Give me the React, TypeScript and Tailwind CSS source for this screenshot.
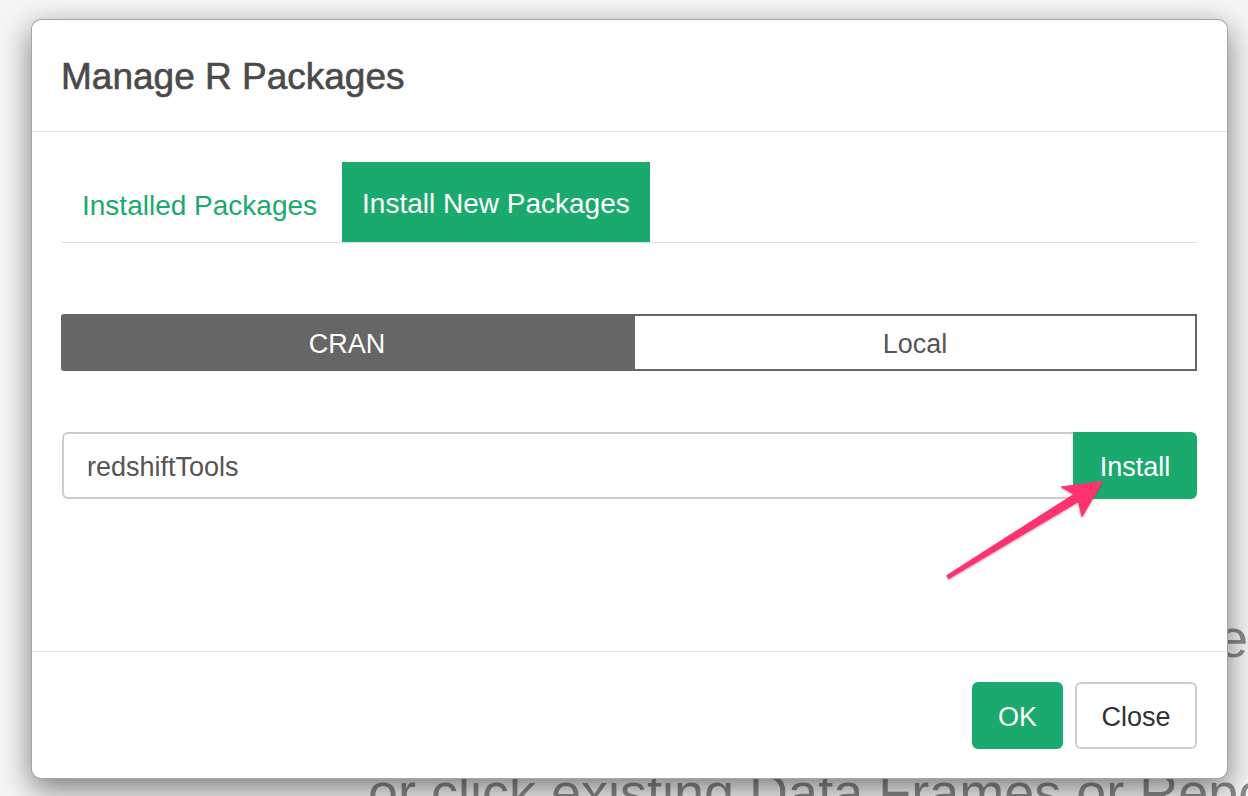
import React from "react";

const GREEN = "bg-[#1baa6e]";

export default function App() {
  return (
    <div className="relative w-[1248px] h-[796px] overflow-hidden bg-[#f5f5f5] font-['Liberation_Sans',Arial,sans-serif]">
      {/* Background page content (partially hidden by the modal) */}
      <div className="flex flex-col pt-[610px] text-[54px] leading-[56px] text-[#8a8a8a]">
        <div className="flex justify-end whitespace-nowrap overflow-hidden">
          <span>Click + button to create a new Data Frame</span>
        </div>
        <div className="mt-[98px] pl-[368px] whitespace-nowrap">
          or click existing Data Frames or Reports.
        </div>
      </div>

      {/* Modal */}
      <div className="absolute left-[31px] top-[19px] w-[1197px] h-[760px] flex flex-col bg-white border border-[rgba(0,0,0,0.35)] rounded-[10px] shadow-[0_10px_30px_rgba(0,0,0,0.5)]">
        {/* Header */}
        <div className="h-[112px] shrink-0 flex items-center pl-[29px] pr-[30px] pt-[2px] border-b border-[#e5e5e5]">
          <h4 className="text-[37px] leading-[40px] text-[#4a4a4a] [-webkit-text-stroke:0.6px_#4a4a4a]">
            Manage R Packages
          </h4>
        </div>

        {/* Body */}
        <div className="flex-1 flex flex-col px-[30px] pt-[30px]">
          {/* Tabs */}
          <div className="flex h-[81px] border-b border-[#dddddd]">
            <div className="h-[80px] flex items-center px-[20px] mr-[5px] text-[28px] text-[#1baa6e] pt-[7px]">
              Installed Packages
            </div>
            <div className={`h-[80px] flex items-center px-[20px] pt-[4px] text-[28px] text-white ${GREEN}`}>
              Install New Packages
            </div>
          </div>

          {/* Segmented control */}
          <div className="flex h-[57px] mt-[71px] text-[27px]">
            <div className="w-[572px] flex items-center justify-center pt-[4px] bg-[#666666] text-white rounded-l-[3px] -ml-[1px]">
              CRAN
            </div>
            <div className="flex-1 flex items-center justify-center pt-[4px] border-2 border-[#666666] text-[#555555]">
              Local
            </div>
          </div>

          {/* Input group */}
          <div className="flex h-[67px] mt-[61px] text-[27px]">
            <input
              readOnly
              defaultValue="redshiftTools"
              className="flex-1 min-w-0 h-full border-2 border-r-0 border-[#cccccc] rounded-l-[6px] pl-[23px] pt-[4px] text-[27px] text-[#555555] outline-none bg-white font-['Liberation_Sans',Arial,sans-serif]"
            />
            <div className={`w-[124px] flex items-center justify-center pt-[4px] text-white rounded-r-[6px] ${GREEN}`}>
              Install
            </div>
          </div>
        </div>

        {/* Footer */}
        <div className="h-[127px] shrink-0 flex justify-end items-start gap-[12px] px-[30px] pt-[30px] border-t border-[#e5e5e5] text-[27px]">
          <div className={`w-[91px] h-[67px] flex items-center justify-center pt-[4px] text-white rounded-[6px] ${GREEN}`}>
            OK
          </div>
          <div className="w-[122px] h-[67px] flex items-center justify-center pt-[4px] text-[#333333] bg-white border-2 border-[#cccccc] rounded-[6px]">
            Close
          </div>
        </div>
      </div>

      {/* Annotation arrow */}
      <svg
        className="absolute left-0 top-0 pointer-events-none"
        width="1248"
        height="796"
        viewBox="0 0 1248 796"
      >
        <defs>
          <filter id="arrowShadow" x="-10%" y="-10%" width="120%" height="120%">
            <feDropShadow dx="0" dy="1" stdDeviation="1.2" floodColor="#000" floodOpacity="0.3" />
          </filter>
        </defs>
        <polygon
          points="947.2,575.7 1074.4,494.3 1062,487 1102,482 1082,516 1078.6,501.2 948.8,578.3"
          fill="#ff3270"
          stroke="#ff3270"
          strokeWidth="1.5"
          strokeLinejoin="round"
          filter="url(#arrowShadow)"
        />
      </svg>
    </div>
  );
}
